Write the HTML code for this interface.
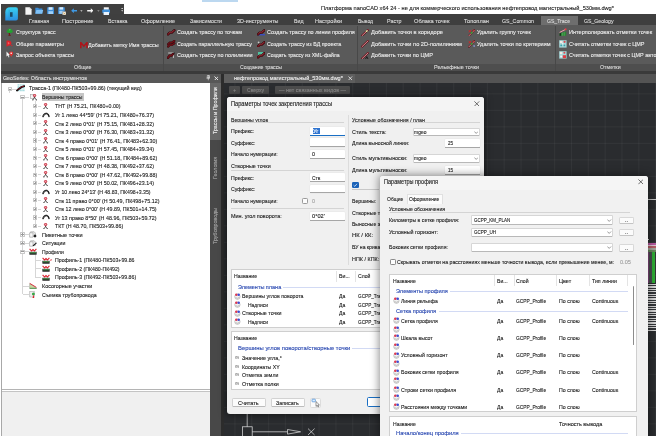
<!DOCTYPE html>
<html><head><meta charset="utf-8"><title>nanoCAD</title>
<style>
html,body{margin:0;padding:0;background:#fff;}
body{width:656px;height:436px;position:relative;overflow:hidden;font-family:"Liberation Sans",sans-serif;}
#root{position:absolute;left:0;top:0;width:656px;height:436px;overflow:hidden;will-change:transform;}
#root div,#root span,#root svg{position:absolute;}
#root span{white-space:nowrap;line-height:1;transform-origin:0 50%;-webkit-text-stroke:0.12px currentColor;}
</style></head><body><div id="root">
<div style="left:1.3px;top:3.6px;width:123px;height:11.4px;background:#404040;"></div>
<div style="left:1.3px;top:14px;width:654.7px;height:11.4px;background:#3f3f3f;"></div>
<div style="left:1.3px;top:25.2px;width:654.7px;height:46px;background:#5a5a5a;"></div>
<div style="left:1.3px;top:63.8px;width:654.7px;height:7.2px;background:#4e4e4e;"></div>
<div style="left:1.3px;top:71px;width:654.7px;height:2.5px;background:#3a3a3a;"></div>
<div style="left:163px;top:26px;width:1.2px;height:45px;background:#484848;"></div>
<div style="left:357px;top:26px;width:1.2px;height:45px;background:#484848;"></div>
<div style="left:554.5px;top:26px;width:1.2px;height:45px;background:#484848;"></div>
<div style="left:541px;top:15.5px;width:36.5px;height:9.5px;background:#6e6e6e;"></div>
<span style="left:321.0px;top:4.90px;font-size:6.2px;color:#222;transform:scaleX(0.913);">Платформа nanoCAD x64 24 - не для коммерческого использования нефтепровод магистральный_530мм.dwg*</span>
<div style="left:201.5px;top:0px;width:36px;height:1.5px;background:#bcd8f0;"></div>
<span style="left:28.5px;top:17.95px;font-size:6.1px;color:#dcdcdc;transform:scaleX(0.862);">Главная</span>
<span style="left:62.0px;top:17.95px;font-size:6.1px;color:#dcdcdc;transform:scaleX(0.928);">Построение</span>
<span style="left:108.0px;top:17.95px;font-size:6.1px;color:#dcdcdc;transform:scaleX(0.861);">Вставка</span>
<span style="left:141.0px;top:17.95px;font-size:6.1px;color:#dcdcdc;transform:scaleX(0.899);">Оформление</span>
<span style="left:190.0px;top:17.95px;font-size:6.1px;color:#dcdcdc;transform:scaleX(0.865);">Зависимости</span>
<span style="left:237.0px;top:17.95px;font-size:6.1px;color:#dcdcdc;transform:scaleX(0.886);">3D-инструменты</span>
<span style="left:293.5px;top:17.95px;font-size:6.1px;color:#dcdcdc;transform:scaleX(0.861);">Вид</span>
<span style="left:315.0px;top:17.95px;font-size:6.1px;color:#dcdcdc;transform:scaleX(0.903);">Настройки</span>
<span style="left:358.0px;top:17.95px;font-size:6.1px;color:#dcdcdc;transform:scaleX(0.814);">Вывод</span>
<span style="left:386.5px;top:17.95px;font-size:6.1px;color:#dcdcdc;transform:scaleX(0.880);">Растр</span>
<span style="left:414.0px;top:17.95px;font-size:6.1px;color:#dcdcdc;transform:scaleX(0.934);">Облака точек</span>
<span style="left:464.0px;top:17.95px;font-size:6.1px;color:#dcdcdc;transform:scaleX(0.928);">Топоплан</span>
<span style="left:502.0px;top:17.95px;font-size:6.1px;color:#dcdcdc;transform:scaleX(0.867);">GS_Common</span>
<span style="left:547.0px;top:17.95px;font-size:6.1px;color:#dcdcdc;transform:scaleX(0.835);">GS_Trace</span>
<span style="left:583.5px;top:17.95px;font-size:6.1px;color:#dcdcdc;transform:scaleX(0.845);">GS_Geology</span>
<span style="left:15.5px;top:29.25px;font-size:6.1px;color:#ececec;transform:scaleX(0.854);">Структура трасс</span>
<span style="left:15.5px;top:40.95px;font-size:6.1px;color:#ececec;transform:scaleX(0.901);">Общие параметры</span>
<span style="left:15.5px;top:52.15px;font-size:6.1px;color:#ececec;transform:scaleX(0.879);">Запрос объекта трассы</span>
<span style="left:88.4px;top:42.15px;font-size:6.1px;color:#ececec;transform:scaleX(0.884);">Добавить метку Имя трассы</span>
<span style="left:74.3px;top:64.25px;font-size:6.1px;color:#dcdcdc;transform:scaleX(0.873);">Общие</span>
<span style="left:176.5px;top:29.25px;font-size:6.1px;color:#ececec;transform:scaleX(0.888);">Создать трассу по точкам</span>
<span style="left:176.5px;top:40.95px;font-size:6.1px;color:#ececec;transform:scaleX(0.864);">Создать параллельную трассу</span>
<span style="left:176.5px;top:52.15px;font-size:6.1px;color:#ececec;transform:scaleX(0.896);">Создать трассу по полилинии</span>
<span style="left:266.5px;top:29.25px;font-size:6.1px;color:#ececec;transform:scaleX(0.898);">Создать трассу по линии профиля</span>
<span style="left:266.5px;top:40.95px;font-size:6.1px;color:#ececec;transform:scaleX(0.869);">Создать трассу из БД проекта</span>
<span style="left:266.5px;top:52.15px;font-size:6.1px;color:#ececec;transform:scaleX(0.841);">Создать трассу из XML-файла</span>
<span style="left:239.6px;top:64.25px;font-size:6.1px;color:#dcdcdc;transform:scaleX(0.853);">Создание трассы</span>
<span style="left:371.0px;top:29.25px;font-size:6.1px;color:#ececec;transform:scaleX(0.934);">Добавить точки в коридоре</span>
<span style="left:371.0px;top:40.95px;font-size:6.1px;color:#ececec;transform:scaleX(0.924);">Добавить точки по 2D-полилиниям</span>
<span style="left:371.0px;top:52.15px;font-size:6.1px;color:#ececec;transform:scaleX(0.917);">Добавить точки по ЦМР</span>
<span style="left:477.0px;top:29.25px;font-size:6.1px;color:#ececec;transform:scaleX(0.898);">Удалить группу точек</span>
<span style="left:477.0px;top:40.95px;font-size:6.1px;color:#ececec;transform:scaleX(0.919);">Удалить точки по критериям</span>
<span style="left:434.0px;top:64.25px;font-size:6.1px;color:#dcdcdc;transform:scaleX(0.897);">Рельефные точки</span>
<span style="left:568.5px;top:29.25px;font-size:6.1px;color:#ececec;transform:scaleX(0.915);">Интерполировать отметки точек</span>
<span style="left:568.5px;top:40.95px;font-size:6.1px;color:#ececec;transform:scaleX(0.901);">Считать отметки точек с ЦМР</span>
<span style="left:568.5px;top:52.15px;font-size:6.1px;color:#ececec;transform:scaleX(0.891);">Считать отметки точек с ЦМР автоматически</span>
<span style="left:600.0px;top:64.25px;font-size:6.1px;color:#dcdcdc;transform:scaleX(0.866);">Отметки</span>
<div style="left:1.3px;top:73.5px;width:221px;height:9px;background:#585858;"></div>
<span style="left:3.0px;top:75.25px;font-size:6.1px;color:#e0e0e0;transform:scaleX(0.866);">GeoSeries: Область инструментов</span>
<div style="left:1.2px;top:82.5px;width:1px;height:354px;background:#a8a8a8;"></div>
<div style="left:2.2px;top:82.5px;width:208.1px;height:306.5px;background:#ffffff;"></div>
<div style="left:2.2px;top:389px;width:208.1px;height:0.8px;background:#b4b4b4;"></div>
<div style="left:2.2px;top:390.8px;width:208.1px;height:0.8px;background:#c4c4c4;"></div>
<div style="left:2.2px;top:391.6px;width:208.1px;height:45px;background:#f0f0f0;"></div>
<div style="left:210.3px;top:82.5px;width:10.8px;height:354px;background:#484848;"></div>
<div style="left:210.3px;top:83px;width:10.8px;height:57.3px;background:#686868;"></div>
<div style="left:221.1px;top:73.5px;width:3px;height:363px;background:#2c2c2c;"></div>
<span style="left:212.35px;top:134.4px;font-size:6.1px;color:#ececec;transform-origin:0 0;transform:rotate(-90deg) scaleX(0.867);">Трассы и Профили</span>
<span style="left:212.35px;top:179.4px;font-size:6.1px;color:#a4a4a4;transform-origin:0 0;transform:rotate(-90deg) scaleX(0.871);">Геология</span>
<span style="left:212.35px;top:243.9px;font-size:6.1px;color:#a4a4a4;transform-origin:0 0;transform:rotate(-90deg) scaleX(0.875);">Трубопроводы</span>
<div style="left:224px;top:73.5px;width:432px;height:9px;background:#545454;"></div>
<div style="left:224px;top:82.5px;width:432px;height:354px;background:#2a2c2f;background-image:linear-gradient(to right,rgba(255,255,255,.045) 0.7px,transparent 0.7px),linear-gradient(to bottom,rgba(255,255,255,.045) 0.7px,transparent 0.7px);background-size:16.83px 16.5px;background-position:10.45px 10.4px;"></div>
<div style="left:647.8px;top:199.1px;width:8.2px;height:0.7px;background:#c8c8c8;"></div>
<div style="left:648.2px;top:239.4px;width:1px;height:0.8px;background:#d8d8d8;"></div>
<div style="left:648px;top:242.8px;width:8px;height:1.8px;background:#b85aa0;"></div>
<div style="left:648px;top:244.6px;width:8px;height:1.2px;background:#e0c8d8;"></div>
<div style="left:648px;top:245.8px;width:8px;height:2.4px;background:#b86068;"></div>
<div style="left:648px;top:248.2px;width:8px;height:1.6px;background:#a8a8a0;"></div>
<div style="left:648px;top:249.8px;width:8px;height:1.8px;background:#6a8a60;"></div>
<div style="left:648px;top:251.6px;width:4.4px;height:31px;background:#4a4d50;"></div>
<div style="left:648.3px;top:251.6px;width:0.7px;height:31px;background:#80487c;"></div>
<div style="left:652.4px;top:251.6px;width:2.9px;height:31px;background:#2fae35;"></div>
<div style="left:648px;top:284.4px;width:8px;height:46.6px;background:#2a2c2f;background-image:repeating-linear-gradient(to bottom,#d8d8d8 0,#d8d8d8 1.1px,#34373a 1.1px,#34373a 2.4px);"></div>
<svg style="left:4.8px;top:6.6px" width="13.2" height="14" viewBox="0 0 13.2 14"><defs><linearGradient id="lg" x1="0" y1="0" x2="0" y2="1"><stop offset="0" stop-color="#38d2f2"/><stop offset="1" stop-color="#2b8ee2"/></linearGradient></defs><path d="M0.3 13.6 V5.2 Q0.3 0.3 5.2 0.3 H11 Q12.9 0.3 12.9 2.2 V11.8 Q12.9 13.6 11 13.6 Z" fill="url(#lg)"/><rect x="5" y="5.2" width="2.6" height="4.6" fill="#1c4a66"/><path d="M4.2 2.6 V13.6" stroke="#2690c8" stroke-width="0.5"/></svg>
<svg style="left:24.6px;top:6.8px" width="7" height="8" viewBox="0 0 7 8"><path d="M0.4 0.3 H4.6 L6.6 2.3 V7.7 H0.4 Z" fill="#f4f4f4"/><path d="M4.6 0.3 V2.3 H6.6" fill="#c8c8c8"/></svg>
<svg style="left:35.2px;top:7.2px" width="8.4" height="7.2" viewBox="0 0 8.4 7.2"><path d="M0.3 0.8 H3.2 L3.9 1.6 H7.4 V6.6 H0.3 Z" fill="#3f8fd8"/><path d="M1.4 3 H8.2 L7.2 6.8 H0.3 Z" fill="#7fc0f4"/></svg>
<svg style="left:47px;top:7px" width="7.4" height="7.4" viewBox="0 0 7.4 7.4"><rect x="0.2" y="0.2" width="7" height="7" rx="0.6" fill="#3f8fd8"/><rect x="1.6" y="0.2" width="4" height="2.6" fill="#d8ecfc"/><rect x="1.4" y="4.2" width="4.6" height="3" fill="#9fd0f8"/></svg>
<svg style="left:57.8px;top:6.8px" width="8.6" height="8.4" viewBox="0 0 8.6 8.4"><rect x="0.2" y="0.2" width="6.6" height="6.8" rx="0.6" fill="#3f8fd8"/><rect x="1.4" y="0.2" width="3.8" height="2.4" fill="#d8ecfc"/><rect x="1.3" y="3.8" width="4.2" height="3" fill="#9fd0f8"/><rect x="4.4" y="4.6" width="4" height="3.6" rx="0.5" fill="#f0f0f0" stroke="#555" stroke-width="0.4"/><path d="M5.2 5.6 L7.6 7.4 M7.6 5.6 L5.2 7.4" stroke="#c89020" stroke-width="0.5"/></svg>
<svg style="left:70.8px;top:8px" width="6.6" height="5.4" viewBox="0 0 6.6 5.4"><path d="M0.2 2.7 L2.8 0.3 V1.9 H6.4 V3.5 H2.8 V5.1 Z" fill="#3f9ae6"/></svg>
<svg style="left:79.8px;top:9.8px" width="2.8" height="2" viewBox="0 0 2.8 2"><path d="M0.2 0.3 H2.6 L1.4 1.8 Z" fill="#d0d0d0"/></svg>
<svg style="left:86.6px;top:8px" width="6.6" height="5.4" viewBox="0 0 6.6 5.4"><path d="M6.4 2.7 L3.8 0.3 V1.9 H0.2 V3.5 H3.8 V5.1 Z" fill="#f4f4f4"/></svg>
<svg style="left:97px;top:9.8px" width="2.8" height="2" viewBox="0 0 2.8 2"><path d="M0.2 0.3 H2.6 L1.4 1.8 Z" fill="#9a9a9a"/></svg>
<svg style="left:101.8px;top:6.8px" width="8.6" height="8.4" viewBox="0 0 8.6 8.4"><rect x="1.8" y="0.3" width="5" height="2.6" fill="#f4f4f4"/><rect x="0.3" y="2.6" width="8" height="3.6" rx="0.7" fill="#3f8fd8"/><rect x="1.6" y="5" width="5.4" height="3" fill="#e8f2fc"/></svg>
<svg style="left:120.8px;top:8.4px" width="2.4" height="4.6" viewBox="0 0 2.4 4.6"><rect x="0.4" y="0.2" width="1.6" height="0.8" fill="#e8e8e8"/><path d="M0.2 2.2 H2.2 L1.2 3.6 Z" fill="#e8e8e8"/></svg>
<svg style="left:6.4px;top:28.2px" width="7.4" height="8" viewBox="0 0 7.4 8"><path d="M3.2 4.4 L3.6 7.4" stroke="#6a1c14" stroke-width="1.3"/><path d="M2.4 7.6 H4.8" stroke="#6a1c14" stroke-width="0.8"/><path d="M3.7 0.2 L5.6 1.6 L7 3.4 L5.4 5 H2 L0.4 3.4 L1.8 1.6 Z" fill="#22a030"/><path d="M3.7 0.8 L4.8 2 L3 2.6 Z" fill="#58d060"/></svg>
<svg style="left:6.1px;top:40px" width="6.6" height="7" viewBox="0 0 6.6 7"><path d="M0.5 0.4 H2.4 Q5.4 0.6 5.4 3.2 Q5.4 5.6 2.4 5.8 L0.5 6.8 Z" fill="#e02028"/><path d="M1.8 2 Q3.6 2.2 3.6 3.2 Q3.6 4.2 1.8 4.4 Z" fill="#f06068"/><circle cx="5.8" cy="5.6" r="0.7" fill="#e02028"/></svg>
<svg style="left:5.8px;top:51.2px" width="7.6" height="7" viewBox="0 0 7.6 7"><path d="M0.5 0.5 V5.6 L1.8 4.5 L2.7 6.4 L3.4 6 L2.6 4.2 L4 4.1 Z" fill="#f4f4f4"/><path d="M5.2 0.4 Q7.2 0.4 7.2 2.3 Q7.2 3.6 5.9 4.4 L5.2 6.2 L4.5 4.4 Q3.3 3.6 3.3 2.3 Q3.3 0.4 5.2 0.4 Z" fill="#e03030"/><circle cx="5.2" cy="2.3" r="0.8" fill="#fff"/></svg>
<svg style="left:79.8px;top:42.4px" width="7.8" height="6.4" viewBox="0 0 7.8 6.4"><path d="M0.8 6.2 V0.6 L3.9 4.2 L7 0.6 V6.2" fill="none" stroke="#b01218" stroke-width="1.5" stroke-linejoin="miter"/></svg>
<svg style="left:167.2px;top:29.2px" width="8.6" height="6.6" viewBox="0 0 8.6 6.6"><path d="M1 5.4 L2.8 3.6 L4.8 3.6 L7.4 1.2" fill="none" stroke="#2e0a0e" stroke-width="2.4" stroke-linecap="round" stroke-linejoin="round"/><path d="M1 5.4 L2.8 3.6 L4.8 3.6 L7.4 1.2" fill="none" stroke="#701018" stroke-width="1.5" stroke-linecap="round" stroke-linejoin="round"/><path d="M1.6 4.4 L2.9 3.1 L4.8 3.1 L6.8 1.2" fill="none" stroke="#b87078" stroke-width="0.35"/></svg>
<svg style="left:167.2px;top:40.4px" width="8.6" height="7.4" viewBox="0 0 8.6 7.4"><path d="M1 4.2 L2.8 2.6 L4.8 2.6 L7.4 0.9 M1 6.6 L2.8 5 L4.8 5 L7.4 3.3" fill="none" stroke="#2e0a0e" stroke-width="2.1" stroke-linecap="round"/><path d="M1 4.2 L2.8 2.6 L4.8 2.6 L7.4 0.9 M1 6.6 L2.8 5 L4.8 5 L7.4 3.3" fill="none" stroke="#701018" stroke-width="1.3" stroke-linecap="round"/></svg>
<svg style="left:167.2px;top:51.6px" width="8.6" height="7" viewBox="0 0 8.6 7"><path d="M1.2 1 H6.4 V6" fill="none" stroke="#f0f0f0" stroke-width="0.7"/><path d="M1 5.8 L2.6 3.6 L4.6 3.6 L6 2" fill="none" stroke="#2e0a0e" stroke-width="2.4" stroke-linecap="round"/><path d="M1 5.8 L2.6 3.6 L4.6 3.6 L6 2" fill="none" stroke="#701018" stroke-width="1.5" stroke-linecap="round"/><rect x="7" y="0.6" width="1" height="1" fill="#222"/></svg>
<svg style="left:256.8px;top:29.2px" width="8.6" height="6.6" viewBox="0 0 8.6 6.6"><path d="M0.5 5 H8 V6.4 H0.5 Z" fill="#3a4ec0"/><path d="M1 5.4 L2.8 3.6 L4.8 3.6 L7.4 1.2" fill="none" stroke="#2e0a0e" stroke-width="2.4" stroke-linecap="round" stroke-linejoin="round"/><path d="M1 5.4 L2.8 3.6 L4.8 3.6 L7.4 1.2" fill="none" stroke="#701018" stroke-width="1.5" stroke-linecap="round" stroke-linejoin="round"/><path d="M1.6 4.4 L2.9 3.1 L4.8 3.1 L6.8 1.2" fill="none" stroke="#b87078" stroke-width="0.35"/></svg>
<svg style="left:256.8px;top:40.6px" width="8.6" height="6.6" viewBox="0 0 8.6 6.6"><circle cx="1.6" cy="1.4" r="0.9" fill="#c8c8c8"/><path d="M1 5.4 L2.8 3.6 L4.8 3.6 L7.4 1.2" fill="none" stroke="#2e0a0e" stroke-width="2.4" stroke-linecap="round" stroke-linejoin="round"/><path d="M1 5.4 L2.8 3.6 L4.8 3.6 L7.4 1.2" fill="none" stroke="#701018" stroke-width="1.5" stroke-linecap="round" stroke-linejoin="round"/><path d="M1.6 4.4 L2.9 3.1 L4.8 3.1 L6.8 1.2" fill="none" stroke="#b87078" stroke-width="0.35"/></svg>
<svg style="left:256.8px;top:52.2px" width="8.6" height="6.6" viewBox="0 0 8.6 6.6"><rect x="1" y="0" width="5.6" height="3.6" fill="#4fc0a0"/><path d="M1 5.4 L2.8 3.6 L4.8 3.6 L7.4 1.2" fill="none" stroke="#2e0a0e" stroke-width="2.4" stroke-linecap="round" stroke-linejoin="round"/><path d="M1 5.4 L2.8 3.6 L4.8 3.6 L7.4 1.2" fill="none" stroke="#701018" stroke-width="1.5" stroke-linecap="round" stroke-linejoin="round"/><path d="M1.6 4.4 L2.9 3.1 L4.8 3.1 L6.8 1.2" fill="none" stroke="#b87078" stroke-width="0.35"/></svg>
<svg style="left:361.4px;top:28.6px" width="8" height="7.6" viewBox="0 0 8 7.6"><path d="M0.9 6.8 L7 0.9" stroke="#5a0e16" stroke-width="2" stroke-linecap="round"/><path d="M0.9 6.8 L7 0.9" stroke="#f0a4aa" stroke-width="0.9" stroke-linecap="round"/><circle cx="5.6" cy="2.2" r="0.9" fill="#d8f0a0"/></svg>
<svg style="left:361.4px;top:40.2px" width="8" height="7.6" viewBox="0 0 8 7.6"><path d="M0.9 6.8 L7 0.9" stroke="#5a0e16" stroke-width="2" stroke-linecap="round"/><path d="M0.9 6.8 L7 0.9" stroke="#f0a4aa" stroke-width="0.9" stroke-linecap="round"/></svg>
<svg style="left:361.4px;top:51.6px" width="8" height="7.6" viewBox="0 0 8 7.6"><path d="M0.9 6.8 L7 0.9" stroke="#5a0e16" stroke-width="2" stroke-linecap="round"/><path d="M0.9 6.8 L7 0.9" stroke="#f0a4aa" stroke-width="0.9" stroke-linecap="round"/><path d="M4.4 7.4 L5.8 4.6 L7.2 7.4" fill="none" stroke="#151515" stroke-width="0.9"/></svg>
<svg style="left:467.6px;top:28.6px" width="7.6" height="7.6" viewBox="0 0 7.6 7.6"><path d="M0.9 6.8 L6.6 1" stroke="#5a0e16" stroke-width="1.8" stroke-linecap="round"/><path d="M0.9 6.8 L6.6 1" stroke="#f0b0b0" stroke-width="0.8" stroke-linecap="round"/><path d="M0.8 1.2 L3 3.4 M0.8 3.4 L3 1.2 M5 0.6 L6.8 2.4" stroke="#e02020" stroke-width="0.9"/><circle cx="3.6" cy="3.8" r="1" fill="#30a030"/></svg>
<svg style="left:467.6px;top:40.2px" width="7.6" height="7.6" viewBox="0 0 7.6 7.6"><path d="M0.9 6.8 L6.6 1" stroke="#5a0e16" stroke-width="1.8" stroke-linecap="round"/><path d="M0.9 6.8 L6.6 1" stroke="#f0b0b0" stroke-width="0.8" stroke-linecap="round"/><path d="M0.8 1.2 L3 3.4 M0.8 3.4 L3 1.2 M5 0.6 L6.8 2.4" stroke="#e02020" stroke-width="0.9"/><circle cx="3.6" cy="3.8" r="1" fill="#30a030"/><circle cx="6.2" cy="6" r="1.1" fill="#8088b8"/></svg>
<svg style="left:558.6px;top:28px" width="8" height="8" viewBox="0 0 8 8"><path d="M0.6 7.8 V5.4 L7.2 3.6 V7.8 Z" fill="#2c8434"/><path d="M0.6 7.8 V5.4 L2 5 V7.8 Z" fill="#14301a"/><path d="M3.4 4.8 V7.8 M5.2 4.2 V7.8" stroke="#6ac070" stroke-width="0.5"/><path d="M0.6 4.4 L6.6 1.4" stroke="#f0a0a8" stroke-width="1"/><circle cx="6.6" cy="1.3" r="1" fill="#e83a44"/></svg>
<svg style="left:558.8px;top:40px" width="7.8" height="7.8" viewBox="0 0 7.8 7.8"><rect x="0.2" y="0.2" width="7.4" height="7.4" fill="#a4d6d8"/><rect x="0.9" y="0.9" width="2.6" height="2.2" fill="#f2ece6"/><circle cx="5.6" cy="1.8" r="1.1" fill="#e04850"/><circle cx="2.2" cy="5.4" r="0.9" fill="#3aa0a8"/><circle cx="5.4" cy="5.4" r="0.9" fill="#3aa0a8"/><circle cx="3.8" cy="3.8" r="0.7" fill="#f8f8f8"/></svg>
<svg style="left:558.8px;top:51.2px" width="7.8" height="7.8" viewBox="0 0 7.8 7.8"><rect x="0.2" y="0.2" width="7.4" height="7.4" fill="#a4d6d8"/><rect x="0.9" y="0.9" width="2.4" height="2.2" fill="#f2ece6"/><circle cx="5.4" cy="1.8" r="1" fill="#e04850"/><rect x="3.8" y="4.2" width="3.2" height="3" fill="#e03c44"/><circle cx="2.2" cy="5.4" r="1" fill="#f4f4f4"/></svg>
<div style="left:9.299999999999999px;top:91.2px;width:0.6px;height:2.299999999999997px;background:#d6d6d6;"></div>
<div style="left:22.2px;top:99px;width:0.6px;height:195.40000000000003px;background:#d6d6d6;"></div>
<div style="left:35.1px;top:101px;width:0.6px;height:125.0px;background:#d6d6d6;"></div>
<div style="left:35.1px;top:254.65000000000003px;width:0.6px;height:22.649999999999977px;background:#d6d6d6;"></div>
<div style="left:11.8px;top:88.7px;width:4.199999999999999px;height:0.6px;background:#d6d6d6;"></div>
<div style="left:24.6px;top:96.7px;width:4.899999999999999px;height:0.6px;background:#d6d6d6;"></div>
<div style="left:7.5px;top:86.9px;width:4.2px;height:4.2px;border:0.5px solid #c8c8c8;background:#fdfdfd;box-sizing:border-box;border-radius:0.5px;"></div>
<div style="left:8.5px;top:88.7px;width:2.2px;height:0.6px;background:#9a9a9a;"></div>
<svg style="left:15.6px;top:84px" width="9" height="8" viewBox="0 0 9 8"><path d="M2.2 0.4 V7.6 M4.1 0.4 V7.6 M6 0.4 V7.6 M7.9 0.4 V7.6" stroke="#1fa6b0" stroke-width="0.7" stroke-dasharray="0.9 0.5"/><path d="M1 6.4 L3.4 4.6 L5.4 3.2 L8.4 2.2" fill="none" stroke="#101010" stroke-width="1.9" stroke-linecap="round"/><path d="M1.4 5.8 L3.6 4.2 L5.6 2.8 L8 2" fill="none" stroke="#a01424" stroke-width="0.8"/></svg>
<span style="left:29.3px;top:85.45px;font-size:6.1px;color:#1c1c1c;transform:scaleX(0.872);">Трасса-1 (ПК480-ПК503+99.86) (текущий вид)</span>
<div style="left:20.4px;top:94.9px;width:4.2px;height:4.2px;border:0.5px solid #c8c8c8;background:#fdfdfd;box-sizing:border-box;border-radius:0.5px;"></div>
<div style="left:21.4px;top:96.7px;width:2.2px;height:0.6px;background:#9a9a9a;"></div>
<svg style="left:29.6px;top:94px" width="4.6" height="5.6" viewBox="0 0 4.6 5.6"><rect x="0.4" y="0.6" width="3.6" height="4" fill="#f4f4f4" stroke="#a0a0a0" stroke-width="0.6"/></svg>
<svg style="left:32.0px;top:94.2px" width="5.2" height="6.4" viewBox="0 0 5.2 6.4"><path d="M2.6 2.2 V4 M2.6 3.6 L0.7 6 M2.6 3.6 L4.5 6 M0.2 6 H1.4 M3.8 6 H5" stroke="#1a1a1a" stroke-width="0.7" fill="none"/><circle cx="2.6" cy="1.5" r="1.2" fill="#f0a0a8" stroke="#c01428" stroke-width="0.8"/></svg>
<div style="left:42px;top:93.3px;width:41.6px;height:7.4px;background:#c6c6c6;"></div>
<span style="left:42.3px;top:94.25px;font-size:6.1px;color:#1c1c1c;transform:scaleX(0.833);">Вершины трассы</span>
<div style="left:37.5px;top:106.0px;width:3.5px;height:0.6px;background:#d6d6d6;"></div>
<div style="left:33.3px;top:104.2px;width:4.2px;height:4.2px;border:0.5px solid #c8c8c8;background:#fdfdfd;box-sizing:border-box;border-radius:0.5px;"></div>
<div style="left:34.3px;top:106.0px;width:2.2px;height:0.6px;background:#9a9a9a;"></div>
<div style="left:35.1px;top:105.2px;width:0.6px;height:2.2px;background:#9a9a9a;"></div>
<svg style="left:42.5px;top:103.0px" width="5.2" height="6.4" viewBox="0 0 5.2 6.4"><path d="M2.6 2.2 V4 M2.6 3.6 L0.7 6 M2.6 3.6 L4.5 6 M0.2 6 H1.4 M3.8 6 H5" stroke="#1a1a1a" stroke-width="0.7" fill="none"/><circle cx="2.6" cy="1.5" r="1.2" fill="#f0a0a8" stroke="#c01428" stroke-width="0.8"/></svg>
<span style="left:55.0px;top:103.45px;font-size:6.1px;color:#1c1c1c;transform:scaleX(0.864);">ТНТ (Н 75.21, ПК480+0.00)</span>
<div style="left:37.5px;top:114.55px;width:3.5px;height:0.6px;background:#d6d6d6;"></div>
<div style="left:33.3px;top:112.75px;width:4.2px;height:4.2px;border:0.5px solid #c8c8c8;background:#fdfdfd;box-sizing:border-box;border-radius:0.5px;"></div>
<div style="left:34.3px;top:114.55px;width:2.2px;height:0.6px;background:#9a9a9a;"></div>
<div style="left:35.1px;top:113.75px;width:0.6px;height:2.2px;background:#9a9a9a;"></div>
<svg style="left:41.8px;top:111.85px" width="8" height="6" viewBox="0 0 8 6"><path d="M1 4.6 Q2.2 0.9 5 1.6 Q6.6 2.2 7 4.4" fill="none" stroke="#1a1a1a" stroke-width="1.5" stroke-linecap="round"/><path d="M1.4 4 Q2.6 1.6 4.6 2" fill="none" stroke="#9a9a9a" stroke-width="0.5"/></svg>
<span style="left:55.0px;top:112.00px;font-size:6.1px;color:#1c1c1c;transform:scaleX(0.881);">Уг 1 лево 44°59&#x27; (Н 75.21, ПК480+76.37)</span>
<div style="left:37.5px;top:123.10000000000001px;width:3.5px;height:0.6px;background:#d6d6d6;"></div>
<div style="left:33.3px;top:121.30000000000001px;width:4.2px;height:4.2px;border:0.5px solid #c8c8c8;background:#fdfdfd;box-sizing:border-box;border-radius:0.5px;"></div>
<div style="left:34.3px;top:123.10000000000001px;width:2.2px;height:0.6px;background:#9a9a9a;"></div>
<div style="left:35.1px;top:122.30000000000001px;width:0.6px;height:2.2px;background:#9a9a9a;"></div>
<svg style="left:42.5px;top:120.10000000000001px" width="5.2" height="6.4" viewBox="0 0 5.2 6.4"><path d="M2.6 2.2 V4 M2.6 3.6 L0.7 6 M2.6 3.6 L4.5 6 M0.2 6 H1.4 M3.8 6 H5" stroke="#1a1a1a" stroke-width="0.7" fill="none"/><circle cx="2.6" cy="1.5" r="1.2" fill="#f0a0a8" stroke="#c01428" stroke-width="0.8"/></svg>
<span style="left:55.0px;top:120.55px;font-size:6.1px;color:#1c1c1c;transform:scaleX(0.871);">Ств 2 лево 0°01&#x27; (Н 75.15, ПК481+28.32)</span>
<div style="left:37.5px;top:131.64999999999998px;width:3.5px;height:0.6px;background:#d6d6d6;"></div>
<div style="left:33.3px;top:129.85px;width:4.2px;height:4.2px;border:0.5px solid #c8c8c8;background:#fdfdfd;box-sizing:border-box;border-radius:0.5px;"></div>
<div style="left:34.3px;top:131.64999999999998px;width:2.2px;height:0.6px;background:#9a9a9a;"></div>
<div style="left:35.1px;top:130.85px;width:0.6px;height:2.2px;background:#9a9a9a;"></div>
<svg style="left:42.5px;top:128.64999999999998px" width="5.2" height="6.4" viewBox="0 0 5.2 6.4"><path d="M2.6 2.2 V4 M2.6 3.6 L0.7 6 M2.6 3.6 L4.5 6 M0.2 6 H1.4 M3.8 6 H5" stroke="#1a1a1a" stroke-width="0.7" fill="none"/><circle cx="2.6" cy="1.5" r="1.2" fill="#f0a0a8" stroke="#c01428" stroke-width="0.8"/></svg>
<span style="left:55.0px;top:129.10px;font-size:6.1px;color:#1c1c1c;transform:scaleX(0.871);">Ств 3 лево 0°00&#x27; (Н 76.30, ПК483+31.32)</span>
<div style="left:37.5px;top:140.2px;width:3.5px;height:0.6px;background:#d6d6d6;"></div>
<div style="left:33.3px;top:138.4px;width:4.2px;height:4.2px;border:0.5px solid #c8c8c8;background:#fdfdfd;box-sizing:border-box;border-radius:0.5px;"></div>
<div style="left:34.3px;top:140.2px;width:2.2px;height:0.6px;background:#9a9a9a;"></div>
<div style="left:35.1px;top:139.4px;width:0.6px;height:2.2px;background:#9a9a9a;"></div>
<svg style="left:42.5px;top:137.2px" width="5.2" height="6.4" viewBox="0 0 5.2 6.4"><path d="M2.6 2.2 V4 M2.6 3.6 L0.7 6 M2.6 3.6 L4.5 6 M0.2 6 H1.4 M3.8 6 H5" stroke="#1a1a1a" stroke-width="0.7" fill="none"/><circle cx="2.6" cy="1.5" r="1.2" fill="#f0a0a8" stroke="#c01428" stroke-width="0.8"/></svg>
<span style="left:55.0px;top:137.65px;font-size:6.1px;color:#1c1c1c;transform:scaleX(0.877);">Ств 4 право 0°01&#x27; (Н 76.41, ПК483+62.30)</span>
<div style="left:37.5px;top:148.75px;width:3.5px;height:0.6px;background:#d6d6d6;"></div>
<div style="left:33.3px;top:146.95000000000002px;width:4.2px;height:4.2px;border:0.5px solid #c8c8c8;background:#fdfdfd;box-sizing:border-box;border-radius:0.5px;"></div>
<div style="left:34.3px;top:148.75px;width:2.2px;height:0.6px;background:#9a9a9a;"></div>
<div style="left:35.1px;top:147.95000000000002px;width:0.6px;height:2.2px;background:#9a9a9a;"></div>
<svg style="left:42.5px;top:145.75px" width="5.2" height="6.4" viewBox="0 0 5.2 6.4"><path d="M2.6 2.2 V4 M2.6 3.6 L0.7 6 M2.6 3.6 L4.5 6 M0.2 6 H1.4 M3.8 6 H5" stroke="#1a1a1a" stroke-width="0.7" fill="none"/><circle cx="2.6" cy="1.5" r="1.2" fill="#f0a0a8" stroke="#c01428" stroke-width="0.8"/></svg>
<span style="left:55.0px;top:146.20px;font-size:6.1px;color:#1c1c1c;transform:scaleX(0.871);">Ств 5 лево 0°01&#x27; (Н 57.45, ПК484+39.34)</span>
<div style="left:37.5px;top:157.29999999999998px;width:3.5px;height:0.6px;background:#d6d6d6;"></div>
<div style="left:33.3px;top:155.5px;width:4.2px;height:4.2px;border:0.5px solid #c8c8c8;background:#fdfdfd;box-sizing:border-box;border-radius:0.5px;"></div>
<div style="left:34.3px;top:157.29999999999998px;width:2.2px;height:0.6px;background:#9a9a9a;"></div>
<div style="left:35.1px;top:156.5px;width:0.6px;height:2.2px;background:#9a9a9a;"></div>
<svg style="left:42.5px;top:154.29999999999998px" width="5.2" height="6.4" viewBox="0 0 5.2 6.4"><path d="M2.6 2.2 V4 M2.6 3.6 L0.7 6 M2.6 3.6 L4.5 6 M0.2 6 H1.4 M3.8 6 H5" stroke="#1a1a1a" stroke-width="0.7" fill="none"/><circle cx="2.6" cy="1.5" r="1.2" fill="#f0a0a8" stroke="#c01428" stroke-width="0.8"/></svg>
<span style="left:55.0px;top:154.75px;font-size:6.1px;color:#1c1c1c;transform:scaleX(0.877);">Ств 6 право 0°00&#x27; (Н 51.18, ПК484+89.62)</span>
<div style="left:37.5px;top:165.85px;width:3.5px;height:0.6px;background:#d6d6d6;"></div>
<div style="left:33.3px;top:164.05px;width:4.2px;height:4.2px;border:0.5px solid #c8c8c8;background:#fdfdfd;box-sizing:border-box;border-radius:0.5px;"></div>
<div style="left:34.3px;top:165.85px;width:2.2px;height:0.6px;background:#9a9a9a;"></div>
<div style="left:35.1px;top:165.05px;width:0.6px;height:2.2px;background:#9a9a9a;"></div>
<svg style="left:42.5px;top:162.85px" width="5.2" height="6.4" viewBox="0 0 5.2 6.4"><path d="M2.6 2.2 V4 M2.6 3.6 L0.7 6 M2.6 3.6 L4.5 6 M0.2 6 H1.4 M3.8 6 H5" stroke="#1a1a1a" stroke-width="0.7" fill="none"/><circle cx="2.6" cy="1.5" r="1.2" fill="#f0a0a8" stroke="#c01428" stroke-width="0.8"/></svg>
<span style="left:55.0px;top:163.30px;font-size:6.1px;color:#1c1c1c;transform:scaleX(0.871);">Ств 7 лево 0°00&#x27; (Н 48.38, ПК492+37.62)</span>
<div style="left:37.5px;top:174.39999999999998px;width:3.5px;height:0.6px;background:#d6d6d6;"></div>
<div style="left:33.3px;top:172.6px;width:4.2px;height:4.2px;border:0.5px solid #c8c8c8;background:#fdfdfd;box-sizing:border-box;border-radius:0.5px;"></div>
<div style="left:34.3px;top:174.39999999999998px;width:2.2px;height:0.6px;background:#9a9a9a;"></div>
<div style="left:35.1px;top:173.6px;width:0.6px;height:2.2px;background:#9a9a9a;"></div>
<svg style="left:42.5px;top:171.39999999999998px" width="5.2" height="6.4" viewBox="0 0 5.2 6.4"><path d="M2.6 2.2 V4 M2.6 3.6 L0.7 6 M2.6 3.6 L4.5 6 M0.2 6 H1.4 M3.8 6 H5" stroke="#1a1a1a" stroke-width="0.7" fill="none"/><circle cx="2.6" cy="1.5" r="1.2" fill="#f0a0a8" stroke="#c01428" stroke-width="0.8"/></svg>
<span style="left:55.0px;top:171.85px;font-size:6.1px;color:#1c1c1c;transform:scaleX(0.877);">Ств 8 право 0°00&#x27; (Н 47.62, ПК492+99.88)</span>
<div style="left:37.5px;top:182.95px;width:3.5px;height:0.6px;background:#d6d6d6;"></div>
<div style="left:33.3px;top:181.15px;width:4.2px;height:4.2px;border:0.5px solid #c8c8c8;background:#fdfdfd;box-sizing:border-box;border-radius:0.5px;"></div>
<div style="left:34.3px;top:182.95px;width:2.2px;height:0.6px;background:#9a9a9a;"></div>
<div style="left:35.1px;top:182.15px;width:0.6px;height:2.2px;background:#9a9a9a;"></div>
<svg style="left:42.5px;top:179.95px" width="5.2" height="6.4" viewBox="0 0 5.2 6.4"><path d="M2.6 2.2 V4 M2.6 3.6 L0.7 6 M2.6 3.6 L4.5 6 M0.2 6 H1.4 M3.8 6 H5" stroke="#1a1a1a" stroke-width="0.7" fill="none"/><circle cx="2.6" cy="1.5" r="1.2" fill="#f0a0a8" stroke="#c01428" stroke-width="0.8"/></svg>
<span style="left:55.0px;top:180.40px;font-size:6.1px;color:#1c1c1c;transform:scaleX(0.871);">Ств 9 лево 0°00&#x27; (Н 50.02, ПК496+23.14)</span>
<div style="left:37.5px;top:191.5px;width:3.5px;height:0.6px;background:#d6d6d6;"></div>
<div style="left:33.3px;top:189.70000000000002px;width:4.2px;height:4.2px;border:0.5px solid #c8c8c8;background:#fdfdfd;box-sizing:border-box;border-radius:0.5px;"></div>
<div style="left:34.3px;top:191.5px;width:2.2px;height:0.6px;background:#9a9a9a;"></div>
<div style="left:35.1px;top:190.70000000000002px;width:0.6px;height:2.2px;background:#9a9a9a;"></div>
<svg style="left:41.8px;top:188.8px" width="8" height="6" viewBox="0 0 8 6"><path d="M1 4.6 Q2.2 0.9 5 1.6 Q6.6 2.2 7 4.4" fill="none" stroke="#1a1a1a" stroke-width="1.5" stroke-linecap="round"/><path d="M1.4 4 Q2.6 1.6 4.6 2" fill="none" stroke="#9a9a9a" stroke-width="0.5"/></svg>
<span style="left:55.0px;top:188.95px;font-size:6.1px;color:#1c1c1c;transform:scaleX(0.851);">Уг 10 лево 24°13&#x27; (Н 48.83, ПК498+3.35)</span>
<div style="left:37.5px;top:200.05px;width:3.5px;height:0.6px;background:#d6d6d6;"></div>
<div style="left:33.3px;top:198.25000000000003px;width:4.2px;height:4.2px;border:0.5px solid #c8c8c8;background:#fdfdfd;box-sizing:border-box;border-radius:0.5px;"></div>
<div style="left:34.3px;top:200.05px;width:2.2px;height:0.6px;background:#9a9a9a;"></div>
<div style="left:35.1px;top:199.25000000000003px;width:0.6px;height:2.2px;background:#9a9a9a;"></div>
<svg style="left:42.5px;top:197.05px" width="5.2" height="6.4" viewBox="0 0 5.2 6.4"><path d="M2.6 2.2 V4 M2.6 3.6 L0.7 6 M2.6 3.6 L4.5 6 M0.2 6 H1.4 M3.8 6 H5" stroke="#1a1a1a" stroke-width="0.7" fill="none"/><circle cx="2.6" cy="1.5" r="1.2" fill="#f0a0a8" stroke="#c01428" stroke-width="0.8"/></svg>
<span style="left:55.0px;top:197.50px;font-size:6.1px;color:#1c1c1c;transform:scaleX(0.873);">Ств 11 право 0°00&#x27; (Н 50.49, ПК498+75.12)</span>
<div style="left:37.5px;top:208.6px;width:3.5px;height:0.6px;background:#d6d6d6;"></div>
<div style="left:33.3px;top:206.8px;width:4.2px;height:4.2px;border:0.5px solid #c8c8c8;background:#fdfdfd;box-sizing:border-box;border-radius:0.5px;"></div>
<div style="left:34.3px;top:208.6px;width:2.2px;height:0.6px;background:#9a9a9a;"></div>
<div style="left:35.1px;top:207.8px;width:0.6px;height:2.2px;background:#9a9a9a;"></div>
<svg style="left:42.5px;top:205.6px" width="5.2" height="6.4" viewBox="0 0 5.2 6.4"><path d="M2.6 2.2 V4 M2.6 3.6 L0.7 6 M2.6 3.6 L4.5 6 M0.2 6 H1.4 M3.8 6 H5" stroke="#1a1a1a" stroke-width="0.7" fill="none"/><circle cx="2.6" cy="1.5" r="1.2" fill="#f0a0a8" stroke="#c01428" stroke-width="0.8"/></svg>
<span style="left:55.0px;top:206.05px;font-size:6.1px;color:#1c1c1c;transform:scaleX(0.869);">Ств 12 лево 0°00&#x27; (Н 49.89, ПК501+14.75)</span>
<div style="left:37.5px;top:217.14999999999998px;width:3.5px;height:0.6px;background:#d6d6d6;"></div>
<div style="left:33.3px;top:215.35px;width:4.2px;height:4.2px;border:0.5px solid #c8c8c8;background:#fdfdfd;box-sizing:border-box;border-radius:0.5px;"></div>
<div style="left:34.3px;top:217.14999999999998px;width:2.2px;height:0.6px;background:#9a9a9a;"></div>
<div style="left:35.1px;top:216.35px;width:0.6px;height:2.2px;background:#9a9a9a;"></div>
<svg style="left:41.8px;top:214.45px" width="8" height="6" viewBox="0 0 8 6"><path d="M1 4.6 Q2.2 0.9 5 1.6 Q6.6 2.2 7 4.4" fill="none" stroke="#1a1a1a" stroke-width="1.5" stroke-linecap="round"/><path d="M1.4 4 Q2.6 1.6 4.6 2" fill="none" stroke="#9a9a9a" stroke-width="0.5"/></svg>
<span style="left:55.0px;top:214.60px;font-size:6.1px;color:#1c1c1c;transform:scaleX(0.880);">Уг 13 право 8°50&#x27; (Н 48.96, ПК503+59.72)</span>
<div style="left:37.5px;top:225.7px;width:3.5px;height:0.6px;background:#d6d6d6;"></div>
<div style="left:33.3px;top:223.9px;width:4.2px;height:4.2px;border:0.5px solid #c8c8c8;background:#fdfdfd;box-sizing:border-box;border-radius:0.5px;"></div>
<div style="left:34.3px;top:225.7px;width:2.2px;height:0.6px;background:#9a9a9a;"></div>
<div style="left:35.1px;top:224.9px;width:0.6px;height:2.2px;background:#9a9a9a;"></div>
<svg style="left:42.5px;top:222.7px" width="5.2" height="6.4" viewBox="0 0 5.2 6.4"><path d="M2.6 2.2 V4 M2.6 3.6 L0.7 6 M2.6 3.6 L4.5 6 M0.2 6 H1.4 M3.8 6 H5" stroke="#1a1a1a" stroke-width="0.7" fill="none"/><circle cx="2.6" cy="1.5" r="1.2" fill="#f0a0a8" stroke="#c01428" stroke-width="0.8"/></svg>
<span style="left:55.0px;top:223.15px;font-size:6.1px;color:#1c1c1c;transform:scaleX(0.870);">ТКТ (Н 48.70, ПК503+99.86)</span>
<div style="left:24.6px;top:234.25px;width:4.399999999999999px;height:0.6px;background:#d6d6d6;"></div>
<div style="left:20.4px;top:232.45000000000002px;width:4.2px;height:4.2px;border:0.5px solid #c8c8c8;background:#fdfdfd;box-sizing:border-box;border-radius:0.5px;"></div>
<div style="left:21.4px;top:234.25px;width:2.2px;height:0.6px;background:#9a9a9a;"></div>
<div style="left:22.2px;top:233.45000000000002px;width:0.6px;height:2.2px;background:#9a9a9a;"></div>
<svg style="left:29.2px;top:231.15px" width="8" height="7" viewBox="0 0 8 7"><path d="M1.6 0.8 H5.2 L6.4 2 V5.4 H1.6 Z" fill="#ececec" stroke="#8a8a8a" stroke-width="0.5"/><path d="M0.6 1.8 H4 V6.2 H0.6 Z" fill="#f8f8f8" stroke="#8a8a8a" stroke-width="0.5"/><path d="M6 3.2 L7.6 5 L6 6.8 L4.4 5 Z" fill="#1a1a1a"/></svg>
<span style="left:42.0px;top:231.70px;font-size:6.1px;color:#1c1c1c;transform:scaleX(0.911);">Пикетные точки</span>
<div style="left:24.6px;top:242.8px;width:4.399999999999999px;height:0.6px;background:#d6d6d6;"></div>
<div style="left:20.4px;top:241.00000000000003px;width:4.2px;height:4.2px;border:0.5px solid #c8c8c8;background:#fdfdfd;box-sizing:border-box;border-radius:0.5px;"></div>
<div style="left:21.4px;top:242.8px;width:2.2px;height:0.6px;background:#9a9a9a;"></div>
<div style="left:22.2px;top:242.00000000000003px;width:0.6px;height:2.2px;background:#9a9a9a;"></div>
<svg style="left:29.2px;top:239.70000000000002px" width="8" height="7" viewBox="0 0 8 7"><path d="M1.6 0.8 H5.2 L6.4 2 V5.4 H1.6 Z" fill="#ececec" stroke="#8a8a8a" stroke-width="0.5"/><path d="M0.6 1.8 H4 V6.2 H0.6 Z" fill="#f8f8f8" stroke="#8a8a8a" stroke-width="0.5"/><path d="M3.6 5.6 L7.2 2.4 L7.8 3.2 L4.4 6.2 Z" fill="#1a1a1a"/></svg>
<span style="left:42.0px;top:240.25px;font-size:6.1px;color:#1c1c1c;transform:scaleX(0.856);">Ситуации</span>
<div style="left:24.6px;top:251.35000000000002px;width:4.399999999999999px;height:0.6px;background:#d6d6d6;"></div>
<div style="left:20.4px;top:249.55000000000004px;width:4.2px;height:4.2px;border:0.5px solid #c8c8c8;background:#fdfdfd;box-sizing:border-box;border-radius:0.5px;"></div>
<div style="left:21.4px;top:251.35000000000002px;width:2.2px;height:0.6px;background:#9a9a9a;"></div>
<svg style="left:29.2px;top:248.25000000000003px" width="8" height="7" viewBox="0 0 8 7"><rect x="0.4" y="3.8" width="7.2" height="2.9" fill="#1a1a1a"/><rect x="0.9" y="4.3" width="6.2" height="1" fill="#5ab060"/><path d="M0.6 0.8 L2.6 3 L4 1.6 L5.4 3 L7.4 0.8" fill="none" stroke="#d8202c" stroke-width="1.1"/></svg>
<span style="left:42.0px;top:248.80px;font-size:6.1px;color:#1c1c1c;transform:scaleX(0.817);">Профили</span>
<div style="left:35.4px;top:259.9px;width:6.100000000000001px;height:0.6px;background:#d6d6d6;"></div>
<svg style="left:42px;top:256.7px" width="8" height="7" viewBox="0 0 8 7"><rect x="0.4" y="3.8" width="7.2" height="2.9" fill="#1a1a1a"/><rect x="0.9" y="4.3" width="6.2" height="1" fill="#5ab060"/><path d="M0.6 0.8 L2.6 3 L4 1.6 L5.4 3 L7.4 0.8" fill="none" stroke="#d8202c" stroke-width="1.1"/></svg>
<svg style="left:49.8px;top:258.9px" width="2.6" height="2.6" viewBox="0 0 2.6 2.6"><circle cx="1.3" cy="1.3" r="0.9" fill="#fff" stroke="#d8202c" stroke-width="0.5"/></svg>
<span style="left:54.8px;top:257.35px;font-size:6.1px;color:#1c1c1c;transform:scaleX(0.860);">Профиль-1 (ПК480-ПК503+99.86</span>
<div style="left:35.4px;top:268.45px;width:6.100000000000001px;height:0.6px;background:#d6d6d6;"></div>
<svg style="left:42px;top:265.25px" width="8" height="7" viewBox="0 0 8 7"><rect x="0.4" y="3.8" width="7.2" height="2.9" fill="#1a1a1a"/><rect x="0.9" y="4.3" width="6.2" height="1" fill="#5ab060"/><path d="M0.6 0.8 L2.6 3 L4 1.6 L5.4 3 L7.4 0.8" fill="none" stroke="#d8202c" stroke-width="1.1"/></svg>
<span style="left:54.8px;top:265.90px;font-size:6.1px;color:#1c1c1c;transform:scaleX(0.853);">Профиль-2 (ПК480-ПК492)</span>
<div style="left:35.4px;top:277.0px;width:6.100000000000001px;height:0.6px;background:#d6d6d6;"></div>
<svg style="left:42px;top:273.8px" width="8" height="7" viewBox="0 0 8 7"><rect x="0.4" y="3.8" width="7.2" height="2.9" fill="#1a1a1a"/><rect x="0.9" y="4.3" width="6.2" height="1" fill="#5ab060"/><path d="M0.6 0.8 L2.6 3 L4 1.6 L5.4 3 L7.4 0.8" fill="none" stroke="#d8202c" stroke-width="1.1"/></svg>
<span style="left:54.8px;top:274.45px;font-size:6.1px;color:#1c1c1c;transform:scaleX(0.859);">Профиль-3 (ПК492-ПК503+99.86)</span>
<div style="left:22.5px;top:285.55px;width:6.5px;height:0.6px;background:#d6d6d6;"></div>
<svg style="left:29.2px;top:282.45000000000005px" width="8" height="7" viewBox="0 0 8 7"><path d="M0.6 6.2 H7.6 L0.6 1.6 Z" fill="#c8d8a0" stroke="#8a8a8a" stroke-width="0.4"/><path d="M0.8 1.4 L7.4 5.4" stroke="#d8202c" stroke-width="0.9"/><path d="M0.6 6.4 H7.6" stroke="#3a8a3a" stroke-width="0.8"/></svg>
<span style="left:42.0px;top:283.00px;font-size:6.1px;color:#1c1c1c;transform:scaleX(0.888);">Косогорные участки</span>
<div style="left:22.5px;top:294.1px;width:6.5px;height:0.6px;background:#d6d6d6;"></div>
<svg style="left:29.2px;top:291.00000000000006px" width="8" height="7.4" viewBox="0 0 8 7.4"><rect x="0.8" y="0.6" width="4.4" height="5.4" fill="#f0f0f0" stroke="#9a9a9a" stroke-width="0.5"/><circle cx="4.4" cy="3" r="1.5" fill="#38a848"/><path d="M4.4 4.4 V6.6" stroke="#d8202c" stroke-width="1"/><circle cx="4.4" cy="6.6" r="0.8" fill="#d8202c"/></svg>
<span style="left:42.0px;top:291.55px;font-size:6.1px;color:#1c1c1c;transform:scaleX(0.865);">Съемка трубопровода</span>
<div style="left:224px;top:73.5px;width:131px;height:9px;background:#5e5e5e;"></div>
<span style="left:234.4px;top:75.25px;font-size:6.1px;color:#f0f0f0;transform:scaleX(0.904);">нефтепровод магистральный_530мм.dwg*</span>
<svg style="left:348px;top:75.8px" width="4.6" height="4.6" viewBox="0 0 4.6 4.6"><path d="M0.5 0.5 L4.1 4.1 M4.1 0.5 L0.5 4.1" stroke="#ececec" stroke-width="0.8"/></svg>
<div style="left:228.7px;top:85.5px;width:11px;height:8.7px;background:#4c4c4c;border-radius:1px;"></div>
<span style="left:232.8px;top:87.20px;font-size:6px;color:#8a8a8a;transform:scaleX(0.910);">+</span>
<div style="left:242.4px;top:85.5px;width:26.2px;height:8.7px;background:#4c4c4c;border-radius:1px;"></div>
<span style="left:247.0px;top:87.35px;font-size:6.1px;color:#8a8a8a;transform:scaleX(0.834);">Сверху</span>
<div style="left:275px;top:85.5px;width:75px;height:8.7px;background:#4c4c4c;border-radius:1px;"></div>
<span style="left:279.0px;top:87.35px;font-size:6.1px;color:#8a8a8a;transform:scaleX(0.894);">— нет связанных видов —</span>
<svg style="left:205.8px;top:75px" width="4.6" height="5.6" viewBox="0 0 4.6 5.6"><path d="M1.3 0.5 H3.3 V3 H1.3 Z M0.4 3.1 H4.2 M2.3 3.1 V5.3" fill="none" stroke="#ececec" stroke-width="0.6"/><path d="M2.9 0.5 V3" stroke="#ececec" stroke-width="0.8"/></svg>
<svg style="left:213.6px;top:75.6px" width="4.8" height="4.8" viewBox="0 0 4.8 4.8"><path d="M0.5 0.5 L4.3 4.3 M4.3 0.5 L0.5 4.3" stroke="#f4f4f4" stroke-width="0.9"/></svg>
<svg style="left:236px;top:413px" width="90" height="23" viewBox="0 0 90 23"><g fill="none" stroke="#e4e4e4" stroke-width="0.7"><path d="M11.2 1 V13.8"/><rect x="6.6" y="13.8" width="9.6" height="10"/><path d="M16.2 18.8 H51.5"/><path d="M51.5 16.5 L64.6 18.8 L51.5 21.1 Z"/><path d="M72 15.6 L78.6 22 M78.6 15.6 L72 22"/></g></svg>
<div style="left:226.9px;top:97px;width:257.6px;height:317.2px;background:#f0f0f0;border-radius:3px;box-shadow:0 0 7px 1px rgba(0,0,0,.5);"></div>
<div style="left:226.9px;top:97px;width:257.6px;height:14px;background:#f4f4f4;border-radius:3px 3px 0 0;"></div>
<span style="left:230.6px;top:101.05px;font-size:6.7px;color:#202020;transform:scaleX(0.846);">Параметры точек закрепления трассы</span>
<svg style="left:474.4px;top:100.5px" width="5.6" height="5.6" viewBox="0 0 5.6 5.6"><path d="M0.4 0.4 L5.2 5.2 M5.2 0.4 L0.4 5.2" stroke="#333" stroke-width="0.7" fill="none"/></svg>
<div style="left:348.2px;top:115px;width:0.6px;height:150px;background:#dcdcdc;"></div>
<span style="left:230.8px;top:116.75px;font-size:6.1px;color:#202020;transform:scaleX(0.846);">Вершины углов</span>
<div style="left:231px;top:122px;width:113px;height:0.6px;background:#d4d4d4;"></div>
<span style="left:230.8px;top:128.45px;font-size:6.1px;color:#202020;transform:scaleX(0.857);">Префикс:</span>
<div style="left:309.6px;top:126.8px;width:35.2px;height:8.6px;background:#ffffff;border-radius:1px;box-shadow:0 0 0 0.4px #e6e6e6;"></div>
<div style="left:309.6px;top:134.9px;width:35.2px;height:0.9px;background:#1a6fc4;"></div>
<span style="left:230.8px;top:139.95px;font-size:6.1px;color:#202020;transform:scaleX(0.855);">Суффикс:</span>
<div style="left:309.6px;top:138.3px;width:35.2px;height:8.6px;background:#ffffff;border-radius:1px;box-shadow:0 0 0 0.4px #e6e6e6;"></div>
<div style="left:309.6px;top:146.4px;width:35.2px;height:0.6px;background:#a6a6a6;"></div>
<span style="left:230.8px;top:151.35px;font-size:6.1px;color:#202020;transform:scaleX(0.840);">Начало нумерации:</span>
<div style="left:309.6px;top:149.70000000000002px;width:35.2px;height:8.6px;background:#ffffff;border-radius:1px;box-shadow:0 0 0 0.4px #e6e6e6;"></div>
<div style="left:309.6px;top:157.8px;width:35.2px;height:0.6px;background:#a6a6a6;"></div>
<div style="left:312.6px;top:128.2px;width:7.6px;height:5.8px;background:#2f74d0;"></div>
<span style="left:313.2px;top:128.30px;font-size:6px;color:#fff;transform:scaleX(0.942);">Уг</span>
<span style="left:312.2px;top:151.45px;font-size:6.1px;color:#202020;transform:scaleX(0.885);">0</span>
<span style="left:230.8px;top:163.35px;font-size:6.1px;color:#202020;transform:scaleX(0.878);">Створные точки</span>
<div style="left:231px;top:169.8px;width:113px;height:0.6px;background:#d4d4d4;"></div>
<span style="left:230.8px;top:174.75px;font-size:6.1px;color:#202020;transform:scaleX(0.857);">Префикс:</span>
<div style="left:309.6px;top:173.20000000000002px;width:35.2px;height:8.3px;background:#ffffff;border-radius:1px;box-shadow:0 0 0 0.4px #e6e6e6;"></div>
<div style="left:309.6px;top:181.00000000000003px;width:35.2px;height:0.6px;background:#a6a6a6;"></div>
<span style="left:230.8px;top:186.15px;font-size:6.1px;color:#202020;transform:scaleX(0.855);">Суффикс:</span>
<div style="left:309.6px;top:184.6px;width:35.2px;height:8.3px;background:#ffffff;border-radius:1px;box-shadow:0 0 0 0.4px #e6e6e6;"></div>
<div style="left:309.6px;top:192.4px;width:35.2px;height:0.6px;background:#a6a6a6;"></div>
<span style="left:230.8px;top:197.95px;font-size:6.1px;color:#202020;transform:scaleX(0.840);">Начало нумерации:</span>
<span style="left:312.2px;top:174.85px;font-size:6.1px;color:#202020;transform:scaleX(0.805);">Ств</span>
<div style="left:302.3px;top:197.7px;width:6px;height:6px;background:#fdfdfd;border:0.6px solid #9a9a9a;border-radius:1.3px;box-sizing:border-box;"></div>
<span style="left:312.2px;top:198.05px;font-size:6.1px;color:#a0a0a0;transform:scaleX(0.885);">0</span>
<div style="left:231px;top:207.7px;width:113px;height:0.6px;background:#d4d4d4;"></div>
<span style="left:230.8px;top:213.45px;font-size:6.1px;color:#202020;transform:scaleX(0.896);">Мин. угол поворота:</span>
<div style="left:309.6px;top:212px;width:35.2px;height:8.4px;background:#ffffff;border-radius:1px;box-shadow:0 0 0 0.4px #e6e6e6;"></div>
<div style="left:309.6px;top:219.9px;width:35.2px;height:0.6px;background:#a6a6a6;"></div>
<span style="left:312.2px;top:213.45px;font-size:6.1px;color:#202020;transform:scaleX(0.929);">0°02&#x27;</span>
<span style="left:351.8px;top:116.55px;font-size:6.1px;color:#202020;transform:scaleX(0.861);">Условные обозначения / план</span>
<div style="left:352px;top:122px;width:127.6px;height:0.6px;background:#d4d4d4;"></div>
<span style="left:351.8px;top:128.55px;font-size:6.1px;color:#202020;transform:scaleX(0.888);">Стиль текста:</span>
<div style="left:412.9px;top:127.6px;width:67px;height:8.8px;background:#ffffff;border-radius:1.2px;border:0.5px solid #d6d6d6;border-bottom-color:#b8b8b8;box-sizing:border-box;"></div>
<svg style="left:473.7px;top:130.7px" width="4.4" height="3" viewBox="0 0 4.4 3"><path d="M0.3 0.5 L2.2 2.4 L4.1 0.5" fill="none" stroke="#555" stroke-width="0.6"/></svg>
<span style="left:414.2px;top:128.75px;font-size:6.1px;color:#202020;transform:scaleX(0.813);">mgeo</span>
<span style="left:351.8px;top:139.95px;font-size:6.1px;color:#202020;transform:scaleX(0.846);">Длина выносной линии:</span>
<div style="left:445.2px;top:138.6px;width:34.7px;height:8.6px;background:#ffffff;border-radius:1px;box-shadow:0 0 0 0.4px #e6e6e6;"></div>
<div style="left:445.2px;top:146.7px;width:34.7px;height:0.6px;background:#a6a6a6;"></div>
<span style="left:448.2px;top:139.95px;font-size:6.1px;color:#202020;transform:scaleX(0.737);">25</span>
<span style="left:351.8px;top:155.05px;font-size:6.1px;color:#202020;transform:scaleX(0.868);">Стиль мультивыноски:</span>
<div style="left:412.9px;top:154px;width:67px;height:8.8px;background:#ffffff;border-radius:1.2px;border:0.5px solid #d6d6d6;border-bottom-color:#b8b8b8;box-sizing:border-box;"></div>
<svg style="left:473.7px;top:157.1px" width="4.4" height="3" viewBox="0 0 4.4 3"><path d="M0.3 0.5 L2.2 2.4 L4.1 0.5" fill="none" stroke="#555" stroke-width="0.6"/></svg>
<span style="left:414.2px;top:155.25px;font-size:6.1px;color:#202020;transform:scaleX(0.813);">mgeo</span>
<span style="left:351.8px;top:166.95px;font-size:6.1px;color:#202020;transform:scaleX(0.861);">Длина мультивыноски:</span>
<div style="left:445.2px;top:165.5px;width:34.7px;height:8.6px;background:#ffffff;border-radius:1px;box-shadow:0 0 0 0.4px #e6e6e6;"></div>
<div style="left:445.2px;top:173.6px;width:34.7px;height:0.6px;background:#a6a6a6;"></div>
<span style="left:448.2px;top:166.95px;font-size:6.1px;color:#202020;transform:scaleX(0.737);">15</span>
<div style="left:352px;top:188.6px;width:27px;height:0.6px;background:#c8c8c8;"></div>
<div style="left:352.2px;top:181.8px;width:6.6px;height:6.6px;background:#1a62b8;border-radius:1.3px;"></div>
<svg style="left:353.2px;top:183px" width="4.6" height="4.2" viewBox="0 0 4.6 4.2"><path d="M0.6 2.2 L1.8 3.4 L4 0.8" fill="none" stroke="#fff" stroke-width="0.7"/></svg>
<span style="left:351.8px;top:198.25px;font-size:6.1px;color:#202020;transform:scaleX(0.847);">Вершины:</span>
<span style="left:351.8px;top:209.55px;font-size:6.1px;color:#202020;transform:scaleX(0.861);">Створные т</span>
<span style="left:351.8px;top:220.95px;font-size:6.1px;color:#202020;transform:scaleX(0.825);">Выносные э</span>
<span style="left:351.8px;top:232.35px;font-size:6.1px;color:#202020;transform:scaleX(0.971);">НК / КК:</span>
<span style="left:351.8px;top:243.75px;font-size:6.1px;color:#202020;transform:scaleX(0.832);">ВУ на крива</span>
<span style="left:351.8px;top:255.55px;font-size:6.1px;color:#202020;transform:scaleX(0.889);">НПК / КПК:</span>
<div style="left:231px;top:269.3px;width:250px;height:58.4px;background:#ffffff;border:0.6px solid #cfcfcf;box-sizing:border-box;"></div>
<span style="left:234.2px;top:273.15px;font-size:6.1px;color:#202020;transform:scaleX(0.845);">Название</span>
<span style="left:339.2px;top:273.15px;font-size:6.1px;color:#202020;transform:scaleX(0.860);">Ви...</span>
<span style="left:357.8px;top:273.15px;font-size:6.1px;color:#202020;transform:scaleX(0.836);">Слой</span>
<div style="left:336px;top:270.5px;width:0.6px;height:11px;background:#e4e4e4;"></div>
<div style="left:354.5px;top:270.5px;width:0.6px;height:11px;background:#e4e4e4;"></div>
<span style="left:237.8px;top:283.65px;font-size:6.1px;color:#2746b0;transform:scaleX(0.901);">Элементы плана</span>
<div style="left:283px;top:286.6px;width:196px;height:0.6px;background:#d2daf4;"></div>
<svg style="left:234.2px;top:292.7px" width="7" height="7" viewBox="0 0 7 7"><circle cx="3.4" cy="3.7" r="2.7" fill="#f2f2f2" stroke="#9a9a9a" stroke-width="0.5"/><circle cx="2.3" cy="1.7" r="1.25" fill="#e03850"/><circle cx="4.7" cy="1.7" r="1.25" fill="#3c4cd4"/><path d="M1.6 4.6 Q3.4 6 5.4 4.4" fill="none" stroke="#8a8a8a" stroke-width="0.5"/></svg>
<span style="left:242.0px;top:293.25px;font-size:6.1px;color:#202020;transform:scaleX(0.858);">Вершины углов поворота</span>
<span style="left:339.2px;top:293.25px;font-size:6.1px;color:#202020;transform:scaleX(0.837);">Да</span>
<span style="left:357.8px;top:293.25px;font-size:6.1px;color:#202020;transform:scaleX(0.767);">GCPP_Tra</span>
<svg style="left:234.2px;top:301.2px" width="7" height="7" viewBox="0 0 7 7"><circle cx="3.4" cy="3.7" r="2.7" fill="#f2f2f2" stroke="#9a9a9a" stroke-width="0.5"/><circle cx="2.3" cy="1.7" r="1.25" fill="#e03850"/><circle cx="4.7" cy="1.7" r="1.25" fill="#3c4cd4"/><path d="M1.6 4.6 Q3.4 6 5.4 4.4" fill="none" stroke="#8a8a8a" stroke-width="0.5"/></svg>
<span style="left:248.0px;top:301.75px;font-size:6.1px;color:#202020;transform:scaleX(0.816);">Надписи</span>
<span style="left:339.2px;top:301.75px;font-size:6.1px;color:#202020;transform:scaleX(0.837);">Да</span>
<span style="left:357.8px;top:301.75px;font-size:6.1px;color:#202020;transform:scaleX(0.767);">GCPP_Tra</span>
<svg style="left:234.2px;top:309.7px" width="7" height="7" viewBox="0 0 7 7"><circle cx="3.4" cy="3.7" r="2.7" fill="#f2f2f2" stroke="#9a9a9a" stroke-width="0.5"/><circle cx="2.3" cy="1.7" r="1.25" fill="#e03850"/><circle cx="4.7" cy="1.7" r="1.25" fill="#3c4cd4"/><path d="M1.6 4.6 Q3.4 6 5.4 4.4" fill="none" stroke="#8a8a8a" stroke-width="0.5"/></svg>
<span style="left:242.0px;top:310.25px;font-size:6.1px;color:#202020;transform:scaleX(0.876);">Створные точки</span>
<span style="left:339.2px;top:310.25px;font-size:6.1px;color:#202020;transform:scaleX(0.837);">Да</span>
<span style="left:357.8px;top:310.25px;font-size:6.1px;color:#202020;transform:scaleX(0.767);">GCPP_Tra</span>
<svg style="left:234.2px;top:318.2px" width="7" height="7" viewBox="0 0 7 7"><circle cx="3.4" cy="3.7" r="2.7" fill="#f2f2f2" stroke="#9a9a9a" stroke-width="0.5"/><circle cx="2.3" cy="1.7" r="1.25" fill="#e03850"/><circle cx="4.7" cy="1.7" r="1.25" fill="#3c4cd4"/><path d="M1.6 4.6 Q3.4 6 5.4 4.4" fill="none" stroke="#8a8a8a" stroke-width="0.5"/></svg>
<span style="left:248.0px;top:318.75px;font-size:6.1px;color:#202020;transform:scaleX(0.816);">Надписи</span>
<span style="left:339.2px;top:318.75px;font-size:6.1px;color:#202020;transform:scaleX(0.837);">Да</span>
<span style="left:357.8px;top:318.75px;font-size:6.1px;color:#202020;transform:scaleX(0.767);">GCPP_Tra</span>
<div style="left:231px;top:331px;width:250px;height:58.5px;background:#ffffff;border:0.6px solid #cfcfcf;box-sizing:border-box;"></div>
<span style="left:234.2px;top:334.95px;font-size:6.1px;color:#202020;transform:scaleX(0.845);">Название</span>
<span style="left:237.8px;top:345.25px;font-size:6.1px;color:#2746b0;transform:scaleX(0.959);">Вершины углов поворота/створные точки</span>
<div style="left:352px;top:348.2px;width:127px;height:0.6px;background:#d2daf4;"></div>
<span style="left:235.0px;top:355.15px;font-size:5.5px;color:#808080;transform:scaleX(1.071);">∞</span>
<span style="left:242.0px;top:355.15px;font-size:6.1px;color:#202020;transform:scaleX(0.886);">Значение угла,°</span>
<span style="left:235.0px;top:363.60px;font-size:5.5px;color:#808080;transform:scaleX(1.071);">∞</span>
<span style="left:242.0px;top:363.60px;font-size:6.1px;color:#202020;transform:scaleX(0.852);">Координаты XY</span>
<span style="left:235.0px;top:372.05px;font-size:5.5px;color:#808080;transform:scaleX(1.071);">∞</span>
<span style="left:242.0px;top:372.05px;font-size:6.1px;color:#202020;transform:scaleX(0.847);">Отметка земли</span>
<span style="left:235.0px;top:380.50px;font-size:5.5px;color:#808080;transform:scaleX(1.071);">∞</span>
<span style="left:242.0px;top:380.50px;font-size:6.1px;color:#202020;transform:scaleX(0.881);">Отметка полки</span>
<div style="left:231.6px;top:397.7px;width:34.3px;height:9.6px;background:#fcfcfc;border:0.6px solid #d2d2d2;border-bottom-color:#bcbcbc;border-radius:1.6px;box-sizing:border-box;"></div>
<span style="left:237.9px;top:399.65px;font-size:6.1px;color:#202020;transform:scaleX(0.901);">Считать</span>
<div style="left:270.6px;top:397.7px;width:34.3px;height:9.6px;background:#fcfcfc;border:0.6px solid #d2d2d2;border-bottom-color:#bcbcbc;border-radius:1.6px;box-sizing:border-box;"></div>
<span style="left:276.0px;top:399.65px;font-size:6.1px;color:#202020;transform:scaleX(0.875);">Записать</span>
<div style="left:310.4px;top:398px;width:10.4px;height:10px;background:#fbfbfb;border:0.5px solid #dcdcdc;border-radius:1.6px;box-sizing:border-box;"></div>
<svg style="left:311px;top:398px" width="10" height="10" viewBox="0 0 10 10"><rect x="1" y="1.2" width="3.4" height="2.6" rx="0.6" fill="#dff0ff" stroke="#2a7ad0" stroke-width="0.6"/><path d="M5 3.6 L5 8.4 L6.2 7.3 L7 9 L7.7 8.7 L6.9 7 L8.4 6.9 Z" fill="#fff" stroke="#333" stroke-width="0.5"/></svg>
<div style="left:366.9px;top:397.3px;width:30px;height:10px;background:#ffffff;border:0.8px solid #1a6fc4;border-radius:1.6px;box-sizing:border-box;"></div>
<div style="left:379.6px;top:175.7px;width:268.2px;height:262px;background:#f1f1f1;border-radius:3px 3px 0 0;box-shadow:0 0 8px 1px rgba(0,0,0,.45);"></div>
<div style="left:379.6px;top:175.7px;width:268.2px;height:14.5px;background:#f5f5f5;border-radius:3px 3px 0 0;"></div>
<span style="left:384.0px;top:179.45px;font-size:6.7px;color:#202020;transform:scaleX(0.827);">Параметры профиля</span>
<svg style="left:637.7px;top:179.3px" width="5.6" height="5.6" viewBox="0 0 5.6 5.6"><path d="M0.4 0.4 L5.2 5.2 M5.2 0.4 L0.4 5.2" stroke="#333" stroke-width="0.7" fill="none"/></svg>
<div style="left:406.6px;top:194px;width:36px;height:10px;background:#fbfbfb;border:0.5px solid #e0e0e0;border-bottom:none;box-sizing:border-box;"></div>
<span style="left:387.4px;top:196.35px;font-size:6.1px;color:#202020;transform:scaleX(0.818);">Общие</span>
<span style="left:409.4px;top:195.65px;font-size:6.1px;color:#202020;transform:scaleX(0.801);">Оформление</span>
<span style="left:389.4px;top:205.95px;font-size:6.1px;color:#202020;transform:scaleX(0.852);">Условные обозначения</span>
<div style="left:389.6px;top:211.8px;width:240px;height:0.6px;background:#d4d4d4;"></div>
<span style="left:389.4px;top:216.95px;font-size:6.1px;color:#202020;transform:scaleX(0.852);">Километры в сетке профиля:</span>
<div style="left:471.3px;top:215.3px;width:142.2px;height:9.4px;background:#ffffff;border-radius:1.2px;border:0.5px solid #d6d6d6;border-bottom-color:#b8b8b8;box-sizing:border-box;"></div>
<svg style="left:607.3px;top:218.7px" width="4.4" height="3" viewBox="0 0 4.4 3"><path d="M0.3 0.5 L2.2 2.4 L4.1 0.5" fill="none" stroke="#555" stroke-width="0.6"/></svg>
<span style="left:473.8px;top:216.95px;font-size:6.1px;color:#202020;transform:scaleX(0.737);">GCPP_KM_PLAN</span>
<div style="left:618.5px;top:216.9px;width:15.5px;height:7.4px;background:#fbfbfb;border:0.5px solid #d8d8d8;border-bottom-color:#c4c4c4;border-radius:1.5px;box-sizing:border-box;"></div>
<span style="left:624.8px;top:217.25px;font-size:6.1px;color:#202020;transform:scaleX(0.885);">..</span>
<span style="left:389.4px;top:229.25px;font-size:6.1px;color:#202020;transform:scaleX(0.881);">Условный горизонт:</span>
<div style="left:471.3px;top:227.6px;width:142.2px;height:9.4px;background:#ffffff;border-radius:1.2px;border:0.5px solid #d6d6d6;border-bottom-color:#b8b8b8;box-sizing:border-box;"></div>
<svg style="left:607.3px;top:230.99999999999997px" width="4.4" height="3" viewBox="0 0 4.4 3"><path d="M0.3 0.5 L2.2 2.4 L4.1 0.5" fill="none" stroke="#555" stroke-width="0.6"/></svg>
<span style="left:473.8px;top:229.25px;font-size:6.1px;color:#202020;transform:scaleX(0.747);">GCPP_UH</span>
<div style="left:618.5px;top:229px;width:15.5px;height:7.4px;background:#fbfbfb;border:0.5px solid #d8d8d8;border-bottom-color:#c4c4c4;border-radius:1.5px;box-sizing:border-box;"></div>
<span style="left:624.8px;top:229.35px;font-size:6.1px;color:#202020;transform:scaleX(0.885);">..</span>
<span style="left:389.4px;top:244.35px;font-size:6.1px;color:#202020;transform:scaleX(0.863);">Боковик сетки профиля:</span>
<div style="left:471.3px;top:242.7px;width:142.2px;height:9.4px;background:#ffffff;border-radius:1.2px;border:0.5px solid #d6d6d6;border-bottom-color:#b8b8b8;box-sizing:border-box;"></div>
<svg style="left:607.3px;top:246.09999999999997px" width="4.4" height="3" viewBox="0 0 4.4 3"><path d="M0.3 0.5 L2.2 2.4 L4.1 0.5" fill="none" stroke="#555" stroke-width="0.6"/></svg>
<div style="left:618.5px;top:244.3px;width:15.5px;height:7.4px;background:#fbfbfb;border:0.5px solid #d8d8d8;border-bottom-color:#c4c4c4;border-radius:1.5px;box-sizing:border-box;"></div>
<span style="left:624.8px;top:244.65px;font-size:6.1px;color:#202020;transform:scaleX(0.885);">..</span>
<div style="left:389.9px;top:259.3px;width:5.8px;height:5.8px;background:#fdfdfd;border:0.6px solid #8a8a8a;border-radius:1.2px;box-sizing:border-box;"></div>
<span style="left:397.0px;top:259.25px;font-size:6.1px;color:#202020;transform:scaleX(0.856);">Скрывать отметки на расстояниях меньше точности вывода, если превышение менее, м:</span>
<span style="left:619.8px;top:259.25px;font-size:6.1px;color:#a0a0a0;transform:scaleX(0.918);">0.05</span>
<div style="left:389.2px;top:273.6px;width:248px;height:138.6px;background:#ffffff;border:0.6px solid #cfcfcf;box-sizing:border-box;"></div>
<span style="left:392.9px;top:278.05px;font-size:6.1px;color:#202020;transform:scaleX(0.837);">Название</span>
<span style="left:497.4px;top:278.05px;font-size:6.1px;color:#202020;transform:scaleX(0.844);">Ви...</span>
<span style="left:516.4px;top:278.05px;font-size:6.1px;color:#202020;transform:scaleX(0.850);">Слой</span>
<span style="left:558.8px;top:278.05px;font-size:6.1px;color:#202020;transform:scaleX(0.893);">Цвет</span>
<span style="left:592.2px;top:278.05px;font-size:6.1px;color:#202020;transform:scaleX(0.856);">Тип линии</span>
<div style="left:494.4px;top:274.8px;width:0.6px;height:11px;background:#e4e4e4;"></div>
<div style="left:513.8px;top:274.8px;width:0.6px;height:11px;background:#e4e4e4;"></div>
<div style="left:555.5px;top:274.8px;width:0.6px;height:11px;background:#e4e4e4;"></div>
<div style="left:589px;top:274.8px;width:0.6px;height:11px;background:#e4e4e4;"></div>
<div style="left:627px;top:274.8px;width:0.6px;height:11px;background:#e4e4e4;"></div>
<div style="left:632.8px;top:286px;width:1.2px;height:58.5px;background:#8c8c8c;border-radius:0.6px;"></div>
<span style="left:395.8px;top:288.15px;font-size:6.1px;color:#2746b0;transform:scaleX(0.922);">Элементы профиля</span>
<div style="left:450px;top:290.6px;width:178px;height:0.6px;background:#d2daf4;"></div>
<span style="left:395.8px;top:308.05px;font-size:6.1px;color:#2746b0;transform:scaleX(0.919);">Сетка профиля</span>
<div style="left:438.5px;top:310.8px;width:189.5px;height:0.6px;background:#d2daf4;"></div>
<svg style="left:392.6px;top:297.3px" width="7" height="7" viewBox="0 0 7 7"><circle cx="3.4" cy="3.7" r="2.7" fill="#f2f2f2" stroke="#9a9a9a" stroke-width="0.5"/><circle cx="2.3" cy="1.7" r="1.25" fill="#e03850"/><circle cx="4.7" cy="1.7" r="1.25" fill="#3c4cd4"/><path d="M1.6 4.6 Q3.4 6 5.4 4.4" fill="none" stroke="#8a8a8a" stroke-width="0.5"/></svg>
<span style="left:400.8px;top:297.85px;font-size:6.1px;color:#202020;transform:scaleX(0.829);">Линия рельефа</span>
<span style="left:497.4px;top:297.85px;font-size:6.1px;color:#202020;transform:scaleX(0.823);">Да</span>
<span style="left:516.4px;top:297.85px;font-size:6.1px;color:#202020;transform:scaleX(0.793);">GCPP_Profile</span>
<span style="left:558.8px;top:297.85px;font-size:6.1px;color:#202020;transform:scaleX(0.859);">По слою</span>
<span style="left:592.2px;top:297.85px;font-size:6.1px;color:#202020;transform:scaleX(0.853);">Continuous</span>
<svg style="left:392.6px;top:317.3px" width="7" height="7" viewBox="0 0 7 7"><circle cx="3.4" cy="3.7" r="2.7" fill="#f2f2f2" stroke="#9a9a9a" stroke-width="0.5"/><circle cx="2.3" cy="1.7" r="1.25" fill="#e03850"/><circle cx="4.7" cy="1.7" r="1.25" fill="#3c4cd4"/><path d="M1.6 4.6 Q3.4 6 5.4 4.4" fill="none" stroke="#8a8a8a" stroke-width="0.5"/></svg>
<span style="left:400.8px;top:317.85px;font-size:6.1px;color:#202020;transform:scaleX(0.841);">Сетка профиля</span>
<span style="left:497.4px;top:317.85px;font-size:6.1px;color:#202020;transform:scaleX(0.823);">Да</span>
<span style="left:516.4px;top:317.85px;font-size:6.1px;color:#202020;transform:scaleX(0.793);">GCPP_Profile</span>
<span style="left:558.8px;top:317.85px;font-size:6.1px;color:#202020;transform:scaleX(0.859);">По слою</span>
<span style="left:592.2px;top:317.85px;font-size:6.1px;color:#202020;transform:scaleX(0.853);">Continuous</span>
<svg style="left:392.6px;top:325.6px" width="7" height="7" viewBox="0 0 7 7"><circle cx="3.4" cy="3.7" r="2.7" fill="#f2f2f2" stroke="#9a9a9a" stroke-width="0.5"/><circle cx="2.3" cy="1.7" r="1.25" fill="#e03850"/><circle cx="4.7" cy="1.7" r="1.25" fill="#3c4cd4"/><path d="M1.6 4.6 Q3.4 6 5.4 4.4" fill="none" stroke="#8a8a8a" stroke-width="0.5"/></svg>
<svg style="left:392.6px;top:334.2px" width="7" height="7" viewBox="0 0 7 7"><circle cx="3.4" cy="3.7" r="2.7" fill="#f2f2f2" stroke="#9a9a9a" stroke-width="0.5"/><circle cx="2.3" cy="1.7" r="1.25" fill="#e03850"/><circle cx="4.7" cy="1.7" r="1.25" fill="#3c4cd4"/><path d="M1.6 4.6 Q3.4 6 5.4 4.4" fill="none" stroke="#8a8a8a" stroke-width="0.5"/></svg>
<span style="left:400.8px;top:334.75px;font-size:6.1px;color:#202020;transform:scaleX(0.852);">Шкала высот</span>
<span style="left:497.4px;top:334.75px;font-size:6.1px;color:#202020;transform:scaleX(0.823);">Да</span>
<span style="left:516.4px;top:334.75px;font-size:6.1px;color:#202020;transform:scaleX(0.793);">GCPP_Profile</span>
<span style="left:558.8px;top:334.75px;font-size:6.1px;color:#202020;transform:scaleX(0.859);">По слою</span>
<svg style="left:392.6px;top:342.5px" width="7" height="7" viewBox="0 0 7 7"><circle cx="3.4" cy="3.7" r="2.7" fill="#f2f2f2" stroke="#9a9a9a" stroke-width="0.5"/><circle cx="2.3" cy="1.7" r="1.25" fill="#e03850"/><circle cx="4.7" cy="1.7" r="1.25" fill="#3c4cd4"/><path d="M1.6 4.6 Q3.4 6 5.4 4.4" fill="none" stroke="#8a8a8a" stroke-width="0.5"/></svg>
<svg style="left:392.6px;top:351.6px" width="7" height="7" viewBox="0 0 7 7"><circle cx="3.4" cy="3.7" r="2.7" fill="#f2f2f2" stroke="#9a9a9a" stroke-width="0.5"/><circle cx="2.3" cy="1.7" r="1.25" fill="#e03850"/><circle cx="4.7" cy="1.7" r="1.25" fill="#3c4cd4"/><path d="M1.6 4.6 Q3.4 6 5.4 4.4" fill="none" stroke="#8a8a8a" stroke-width="0.5"/></svg>
<span style="left:400.8px;top:352.15px;font-size:6.1px;color:#202020;transform:scaleX(0.862);">Условный горизонт</span>
<span style="left:497.4px;top:352.15px;font-size:6.1px;color:#202020;transform:scaleX(0.823);">Да</span>
<span style="left:516.4px;top:352.15px;font-size:6.1px;color:#202020;transform:scaleX(0.793);">GCPP_Profile</span>
<span style="left:558.8px;top:352.15px;font-size:6.1px;color:#202020;transform:scaleX(0.859);">По слою</span>
<svg style="left:392.6px;top:359.9px" width="7" height="7" viewBox="0 0 7 7"><circle cx="3.4" cy="3.7" r="2.7" fill="#f2f2f2" stroke="#9a9a9a" stroke-width="0.5"/><circle cx="2.3" cy="1.7" r="1.25" fill="#e03850"/><circle cx="4.7" cy="1.7" r="1.25" fill="#3c4cd4"/><path d="M1.6 4.6 Q3.4 6 5.4 4.4" fill="none" stroke="#8a8a8a" stroke-width="0.5"/></svg>
<svg style="left:392.6px;top:368.6px" width="7" height="7" viewBox="0 0 7 7"><circle cx="3.4" cy="3.7" r="2.7" fill="#f2f2f2" stroke="#9a9a9a" stroke-width="0.5"/><circle cx="2.3" cy="1.7" r="1.25" fill="#e03850"/><circle cx="4.7" cy="1.7" r="1.25" fill="#3c4cd4"/><path d="M1.6 4.6 Q3.4 6 5.4 4.4" fill="none" stroke="#8a8a8a" stroke-width="0.5"/></svg>
<span style="left:400.8px;top:369.15px;font-size:6.1px;color:#202020;transform:scaleX(0.866);">Боковик сетки профиля</span>
<span style="left:497.4px;top:369.15px;font-size:6.1px;color:#202020;transform:scaleX(0.823);">Да</span>
<span style="left:516.4px;top:369.15px;font-size:6.1px;color:#202020;transform:scaleX(0.793);">GCPP_Profile</span>
<span style="left:558.8px;top:369.15px;font-size:6.1px;color:#202020;transform:scaleX(0.859);">По слою</span>
<span style="left:592.2px;top:369.15px;font-size:6.1px;color:#202020;transform:scaleX(0.853);">Continuous</span>
<svg style="left:392.6px;top:376.6px" width="7" height="7" viewBox="0 0 7 7"><circle cx="3.4" cy="3.7" r="2.7" fill="#f2f2f2" stroke="#9a9a9a" stroke-width="0.5"/><circle cx="2.3" cy="1.7" r="1.25" fill="#e03850"/><circle cx="4.7" cy="1.7" r="1.25" fill="#3c4cd4"/><path d="M1.6 4.6 Q3.4 6 5.4 4.4" fill="none" stroke="#8a8a8a" stroke-width="0.5"/></svg>
<svg style="left:392.6px;top:386.0px" width="7" height="7" viewBox="0 0 7 7"><circle cx="3.4" cy="3.7" r="2.7" fill="#f2f2f2" stroke="#9a9a9a" stroke-width="0.5"/><circle cx="2.3" cy="1.7" r="1.25" fill="#e03850"/><circle cx="4.7" cy="1.7" r="1.25" fill="#3c4cd4"/><path d="M1.6 4.6 Q3.4 6 5.4 4.4" fill="none" stroke="#8a8a8a" stroke-width="0.5"/></svg>
<span style="left:400.8px;top:386.55px;font-size:6.1px;color:#202020;transform:scaleX(0.864);">Строки сетки профиля</span>
<span style="left:497.4px;top:386.55px;font-size:6.1px;color:#202020;transform:scaleX(0.823);">Да</span>
<span style="left:516.4px;top:386.55px;font-size:6.1px;color:#202020;transform:scaleX(0.793);">GCPP_Profile</span>
<span style="left:558.8px;top:386.55px;font-size:6.1px;color:#202020;transform:scaleX(0.859);">По слою</span>
<span style="left:592.2px;top:386.55px;font-size:6.1px;color:#202020;transform:scaleX(0.853);">Continuous</span>
<svg style="left:392.6px;top:394.0px" width="7" height="7" viewBox="0 0 7 7"><circle cx="3.4" cy="3.7" r="2.7" fill="#f2f2f2" stroke="#9a9a9a" stroke-width="0.5"/><circle cx="2.3" cy="1.7" r="1.25" fill="#e03850"/><circle cx="4.7" cy="1.7" r="1.25" fill="#3c4cd4"/><path d="M1.6 4.6 Q3.4 6 5.4 4.4" fill="none" stroke="#8a8a8a" stroke-width="0.5"/></svg>
<svg style="left:392.6px;top:403.1px" width="7" height="7" viewBox="0 0 7 7"><circle cx="3.4" cy="3.7" r="2.7" fill="#f2f2f2" stroke="#9a9a9a" stroke-width="0.5"/><circle cx="2.3" cy="1.7" r="1.25" fill="#e03850"/><circle cx="4.7" cy="1.7" r="1.25" fill="#3c4cd4"/><path d="M1.6 4.6 Q3.4 6 5.4 4.4" fill="none" stroke="#8a8a8a" stroke-width="0.5"/></svg>
<span style="left:400.8px;top:403.65px;font-size:6.1px;color:#202020;transform:scaleX(0.856);">Расстояния между точками</span>
<span style="left:497.4px;top:403.65px;font-size:6.1px;color:#202020;transform:scaleX(0.823);">Да</span>
<span style="left:516.4px;top:403.65px;font-size:6.1px;color:#202020;transform:scaleX(0.793);">GCPP_Profile</span>
<span style="left:558.8px;top:403.65px;font-size:6.1px;color:#202020;transform:scaleX(0.859);">По слою</span>
<div style="left:389.2px;top:416.4px;width:248px;height:22px;background:#ffffff;border:0.6px solid #cfcfcf;box-sizing:border-box;"></div>
<span style="left:392.9px;top:420.85px;font-size:6.1px;color:#202020;transform:scaleX(0.837);">Название</span>
<span style="left:558.8px;top:420.85px;font-size:6.1px;color:#202020;transform:scaleX(0.898);">Точность вывода</span>
<span style="left:395.8px;top:430.25px;font-size:6.1px;color:#2746b0;transform:scaleX(0.945);">Начало/конец профиля</span>
<div style="left:461px;top:433.2px;width:167px;height:0.6px;background:#d2daf4;"></div>
</div></body></html>
